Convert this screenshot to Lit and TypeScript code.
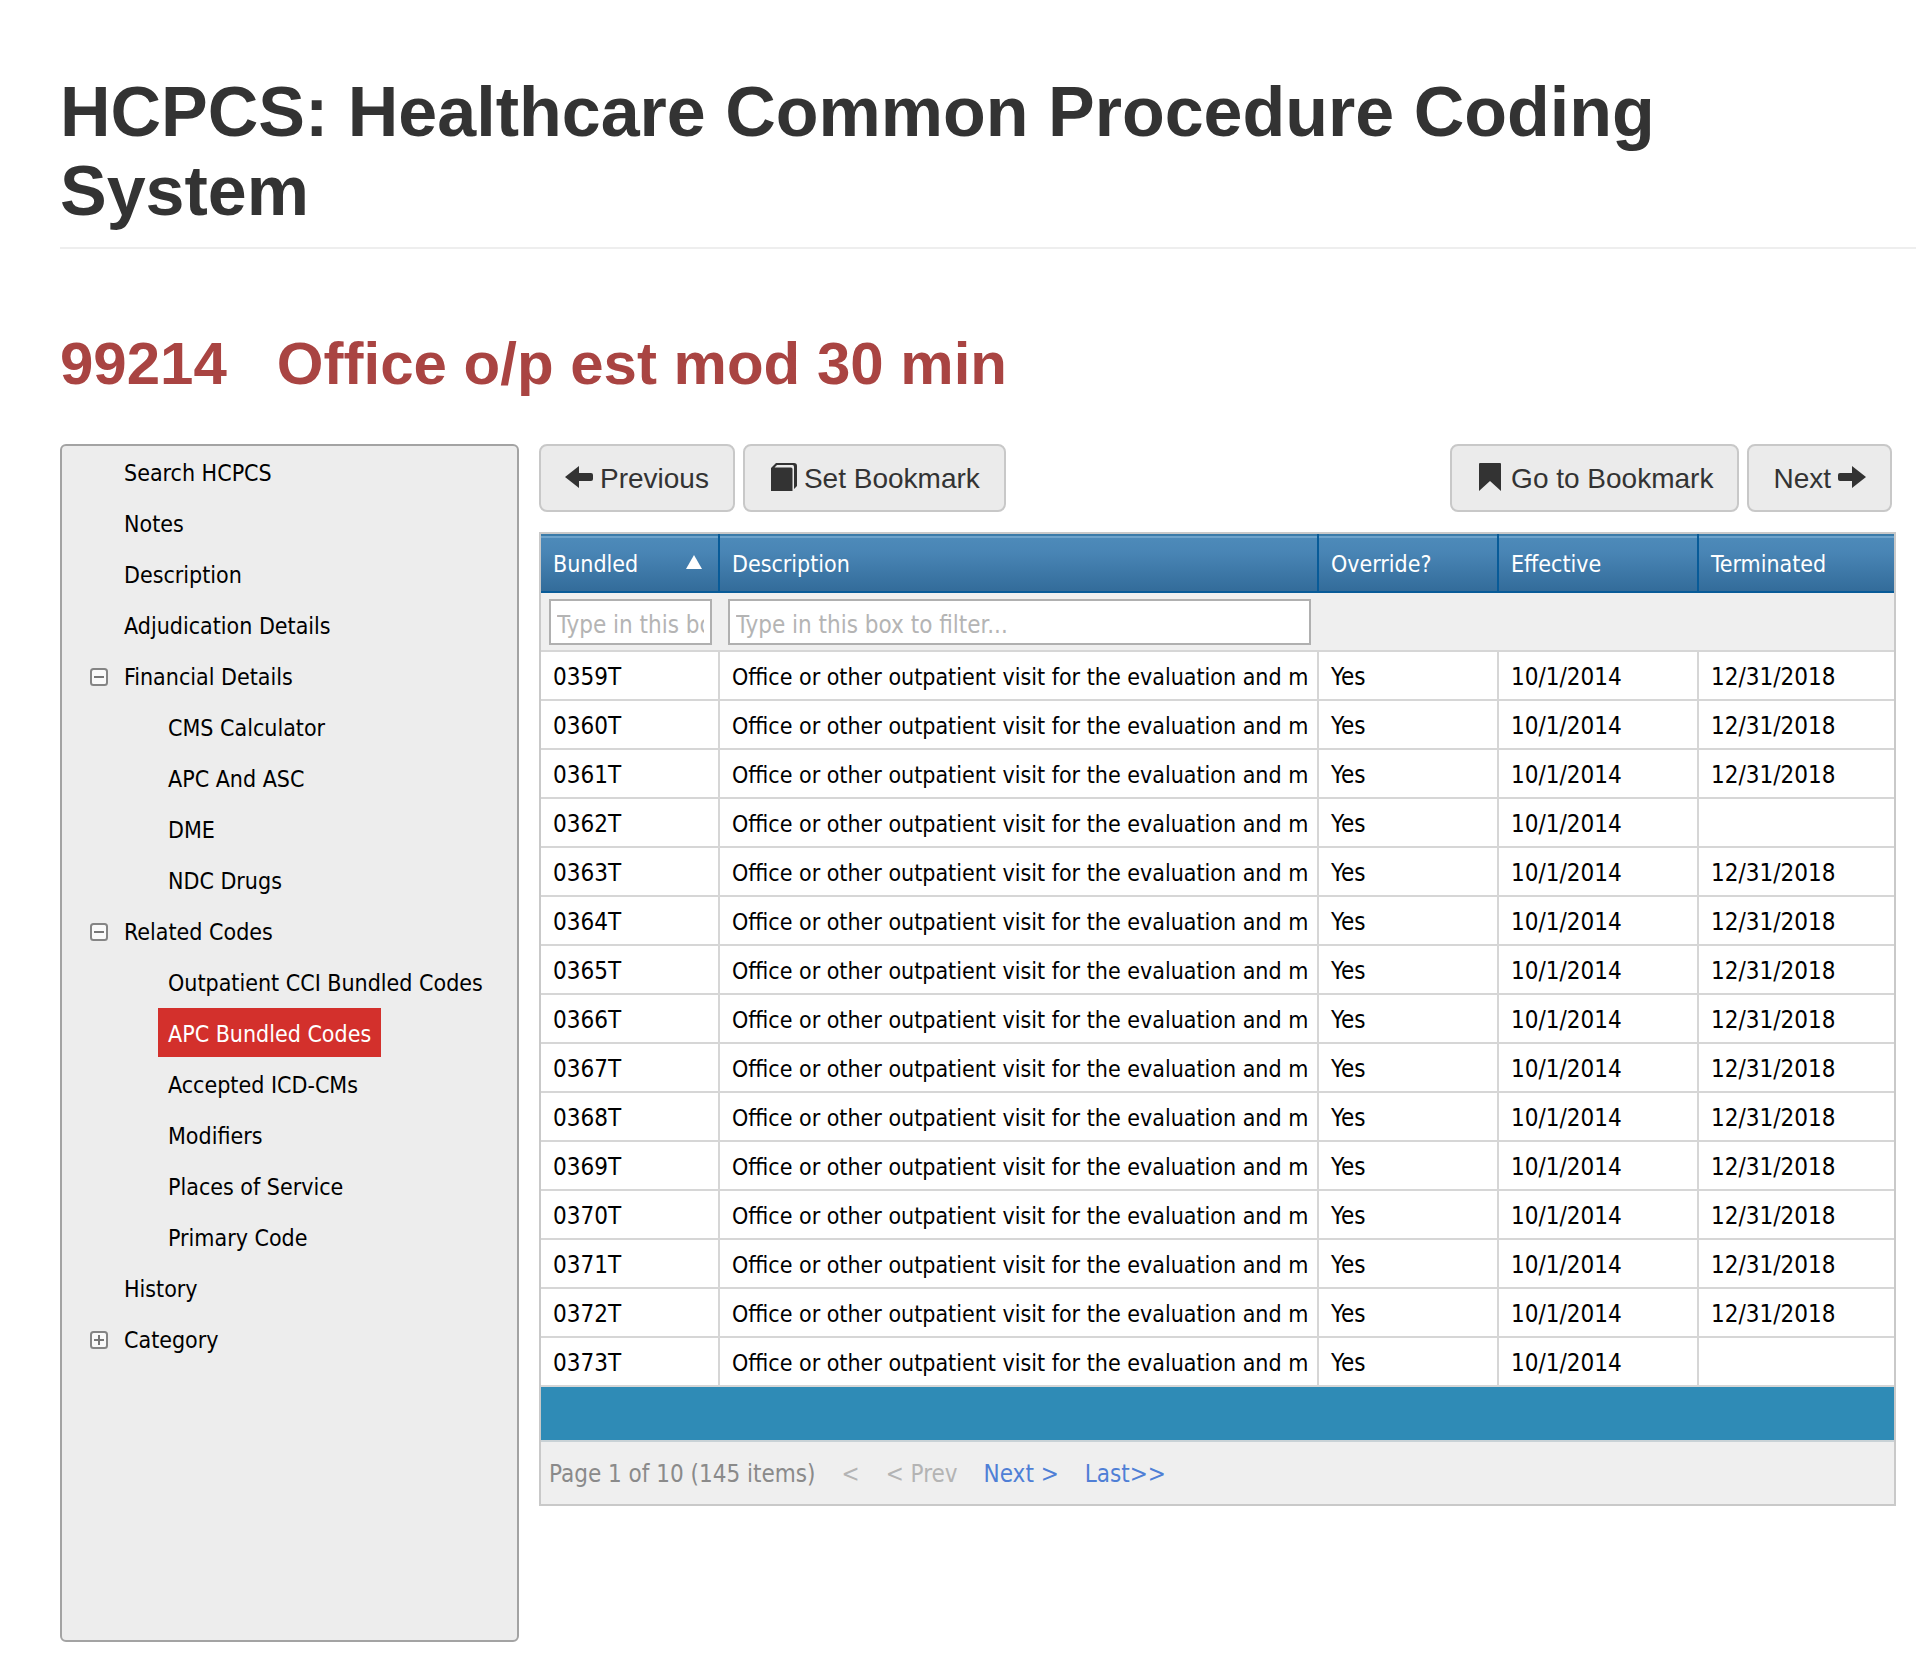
import { LitElement, html, css, svg, nothing } from "lit";
import { customElement, property, state } from "lit/decorators.js";
import { classMap } from "lit/directives/class-map.js";

interface NavNode {
  label: string;
  open?: boolean;
  children?: NavNode[];
}

interface BundledCode {
  code: string;
  terminated: string;
}

const NAV: NavNode[] = [
  { label: "Search HCPCS" },
  { label: "Notes" },
  { label: "Description" },
  { label: "Adjudication Details" },
  {
    label: "Financial Details",
    open: true,
    children: [
      { label: "CMS Calculator" },
      { label: "APC And ASC" },
      { label: "DME" },
      { label: "NDC Drugs" },
    ],
  },
  {
    label: "Related Codes",
    open: true,
    children: [
      { label: "Outpatient CCI Bundled Codes" },
      { label: "APC Bundled Codes" },
      { label: "Accepted ICD-CMs" },
      { label: "Modifiers" },
      { label: "Places of Service" },
      { label: "Primary Code" },
    ],
  },
  { label: "History" },
  { label: "Category", open: false, children: [] },
];

const ACTIVE_LABEL = "APC Bundled Codes";
const DESCRIPTION = "Office or other outpatient visit for the evaluation and m";
const STILL_ACTIVE = new Set([362, 373]);

const ROWS: BundledCode[] = Array.from({ length: 15 }, (_, i) => {
  const n = 359 + i;
  return { code: `0${n}T`, terminated: STILL_ACTIVE.has(n) ? "" : "12/31/2018" };
});

@customElement("code-nav")
export class CodeNav extends LitElement {
  @property({ attribute: false }) nodes: NavNode[] = [];
  @property() active = "";
  @state() private closed = new Set<string>();

  static styles = css`
    :host {
      display: block;
      box-sizing: border-box;
      border: 2px solid #a3a3a3;
      border-radius: 6px;
      background: #ededed;
      font: 23px/45px "DejaVu Sans Condensed", "DejaVu Sans", sans-serif;
    }
    ul {
      list-style: none;
      margin: 0;
      padding: 0;
    }
    .tree {
      padding-left: 28px;
    }
    .sub {
      padding-left: 44px;
    }
    .row {
      display: flex;
      align-items: center;
      height: 51px;
    }
    .slot {
      display: flex;
      width: 24px;
      flex: none;
    }
    .toggle {
      display: flex;
      padding: 2px 0 0;
      border: 0;
      background: none;
      cursor: pointer;
    }
    a {
      padding: 4px 10px 0;
      color: #000;
      text-decoration: none;
      white-space: nowrap;
    }
    .active {
      background: #d3302c;
      color: #fff;
    }
  `;

  private flip(label: string) {
    const next = new Set(this.closed);
    if (!next.delete(label)) next.add(label);
    this.closed = next;
  }

  private renderNode(node: NavNode): unknown {
    const open = !!node.open && !this.closed.has(node.label);
    return html`<li>
      <div class="row">
        <span class="slot">
          ${node.children
            ? html`<button
                class="toggle"
                aria-label=${`Toggle ${node.label}`}
                aria-expanded=${open}
                @click=${() => this.flip(node.label)}
              >
                <svg width="18" height="18" viewBox="0 0 18 18">
                  <rect x="1" y="1" width="16" height="16" rx="2.5" fill="#fafafa" stroke="#858585" stroke-width="2" />
                  <path d=${open ? "M4 9H14" : "M4 9H14M9 4V14"} stroke="#777" stroke-width="2" />
                </svg>
              </button>`
            : nothing}
        </span>
        <a href="#" class=${classMap({ active: node.label === this.active })}>${node.label}</a>
      </div>
      ${open && node.children
        ? html`<ul class="sub">${node.children.map((c) => this.renderNode(c))}</ul>`
        : nothing}
    </li>`;
  }

  render() {
    return html`<nav aria-label="HCPCS sections">
      <ul class="tree">${this.nodes.map((n) => this.renderNode(n))}</ul>
    </nav>`;
  }
}

@customElement("code-grid")
export class CodeGrid extends LitElement {
  @property({ attribute: false }) rows: BundledCode[] = [];

  static styles = css`
    :host {
      display: block;
      box-sizing: border-box;
      border: 2px solid #c9c9c9;
      background: #efefef;
      font: 24px/29px "DejaVu Sans Condensed", "DejaVu Sans", sans-serif;
    }
    table {
      width: 100%;
      table-layout: fixed;
      border-collapse: separate;
      border-spacing: 0;
    }
    .code {
      width: 179px;
    }
    .flag {
      width: 180px;
    }
    .date {
      width: 200px;
    }
    .last {
      width: 195px;
    }
    th,
    td {
      box-sizing: border-box;
      padding: 3px 0 0 12px;
      text-align: left;
      font-weight: normal;
      white-space: nowrap;
      overflow: hidden;
    }
    .head th {
      height: 59px;
      border-right: 2px solid #085b98;
      border-bottom: 2px solid #085b98;
      background: linear-gradient(#3a7ba9 0 2px, #6ea3cb 2px 4px, #4d8ab9 4px, #4985b5 18px, #336c9a);
      color: #fff;
      font-size: 23px;
    }
    .head th:last-child,
    .data td:last-child {
      border-right: 0;
    }
    .sorted {
      display: flex;
      justify-content: space-between;
      align-items: center;
      padding-right: 16px;
    }
    .sorted svg {
      margin-bottom: 5px;
    }
    .filter td {
      height: 59px;
      padding: 0 8px;
      border-bottom: 2px solid #d6d6d6;
    }
    input {
      display: block;
      box-sizing: border-box;
      width: 100%;
      height: 46px;
      padding: 6px 6px 0;
      border: 2px solid #b0b0b0;
      border-radius: 0;
      background: #fff;
      color: #000;
      font: inherit;
      outline: none;
    }
    input::placeholder {
      color: #b4b4b4;
      opacity: 1;
    }
    .data td {
      height: 49px;
      border-right: 2px solid #d6d6d6;
      border-bottom: 2px solid #d6d6d6;
      background: #fff;
      color: #000;
    }
    .data .text {
      font-size: 23px;
    }
    .band {
      height: 53px;
      border-bottom: 2px solid #c9d2d6;
      background: #2f8bb6;
    }
    .pager {
      display: flex;
      align-items: center;
      gap: 26px;
      height: 59px;
      padding: 3px 8px 0;
      color: #8a8a8a;
      white-space: nowrap;
    }
    .off {
      color: #b4b4b4;
    }
    .pager a {
      color: #4f7fd6;
      text-decoration: none;
    }
  `;

  render() {
    return html`
      <table>
        <colgroup>
          <col class="code" />
          <col />
          <col class="flag" />
          <col class="date" />
          <col class="last" />
        </colgroup>
        <thead>
          <tr class="head">
            <th scope="col" aria-sort="ascending">
              <span class="sorted">
                Bundled
                <svg width="16" height="14" viewBox="0 0 16 14"><path d="M8 0L16 14H0Z" fill="#fff" /></svg>
              </span>
            </th>
            <th scope="col">Description</th>
            <th scope="col">Override?</th>
            <th scope="col">Effective</th>
            <th scope="col">Terminated</th>
          </tr>
          <tr class="filter">
            <td><input type="text" aria-label="Filter by bundled code" placeholder="Type in this box to filter..." /></td>
            <td><input type="text" aria-label="Filter by description" placeholder="Type in this box to filter..." /></td>
            <td></td>
            <td></td>
            <td></td>
          </tr>
        </thead>
        <tbody>
          ${this.rows.map(
            (r) => html`<tr class="data">
              <td>${r.code}</td>
              <td class="text">${DESCRIPTION}</td>
              <td>Yes</td>
              <td>10/1/2014</td>
              <td>${r.terminated}</td>
            </tr>`,
          )}
        </tbody>
      </table>
      <div class="band"></div>
      <div class="pager">
        <span>Page 1 of 10 (145 items)</span>
        <span class="off">&lt;</span>
        <span class="off">&lt; Prev</span>
        <a href="#">Next &gt;</a>
        <a href="#">Last&gt;&gt;</a>
      </div>
    `;
  }
}

const leftArrow = svg`<path d="M0 14L14 3V10H26Q28 10 28 12V16Q28 18 26 18H14V25Z" />`;
const rightArrow = svg`<path d="M28 14L14 3V10H2Q0 10 0 12V16Q0 18 2 18H14V25Z" />`;
const book = svg`<path d="M2 5L7 0H25Q28 0 28 3V23L25 26V4Q25 2 23.500 2H8L5.500 4.500H22Q23.500 4.500 23.500 6V28H2Z" />`;
const ribbon = svg`<path d="M4 0H24Q25 0 25 1V28L14 18L3 28V1Q3 0 4 0Z" />`;

@customElement("app-root")
export class AppRoot extends LitElement {
  static styles = css`
    :host {
      display: block;
      background: #fff;
      color: #333;
      font-family: "Liberation Sans", Arial, sans-serif;
    }
    .page {
      padding: 73px 4px 24px 60px;
    }
    h1 {
      margin: 0;
      padding-bottom: 16px;
      border-bottom: 2px solid #eee;
      font-size: 70px;
      line-height: 79px;
      font-weight: bold;
    }
    h2 {
      display: flex;
      gap: 50px;
      margin: 82px 0 47px;
      color: #a94442;
      font-size: 60px;
      line-height: 66px;
      font-weight: bold;
    }
    .columns {
      display: grid;
      grid-template-columns: 459px minmax(0, 1fr);
      gap: 20px;
      padding-right: 20px;
    }
    code-nav {
      min-height: 1198px;
    }
    .bar {
      display: flex;
      gap: 8px;
      margin: 0 4px 20px 0;
    }
    .bar button {
      display: flex;
      align-items: center;
      gap: 7px;
      height: 68px;
      padding: 2px 24px 0;
      border: 2px solid #c8c8c8;
      border-radius: 8px;
      background: #ebebeb;
      color: #333;
      font: 28px/40px "Liberation Sans", Arial, sans-serif;
      white-space: nowrap;
      cursor: pointer;
    }
    .bar svg {
      margin-bottom: 4px;
      fill: #333;
    }
    .bar .push {
      margin-left: auto;
    }
  `;

  render() {
    return html`
      <main class="page">
        <h1>HCPCS: Healthcare Common Procedure Coding System</h1>
        <h2><span>99214</span><span>Office o/p est mod 30 min</span></h2>
        <div class="columns">
          <code-nav .nodes=${NAV} .active=${ACTIVE_LABEL}></code-nav>
          <section>
            <div class="bar">
              <button type="button"><svg width="28" height="28" viewBox="0 0 28 28">${leftArrow}</svg>Previous</button>
              <button type="button"><svg width="28" height="28" viewBox="0 0 28 28">${book}</svg>Set Bookmark</button>
              <button type="button" class="push"><svg width="28" height="28" viewBox="0 0 28 28">${ribbon}</svg>Go to Bookmark</button>
              <button type="button">Next<svg width="28" height="28" viewBox="0 0 28 28">${rightArrow}</svg></button>
            </div>
            <code-grid .rows=${ROWS}></code-grid>
          </section>
        </div>
      </main>
    `;
  }
}
